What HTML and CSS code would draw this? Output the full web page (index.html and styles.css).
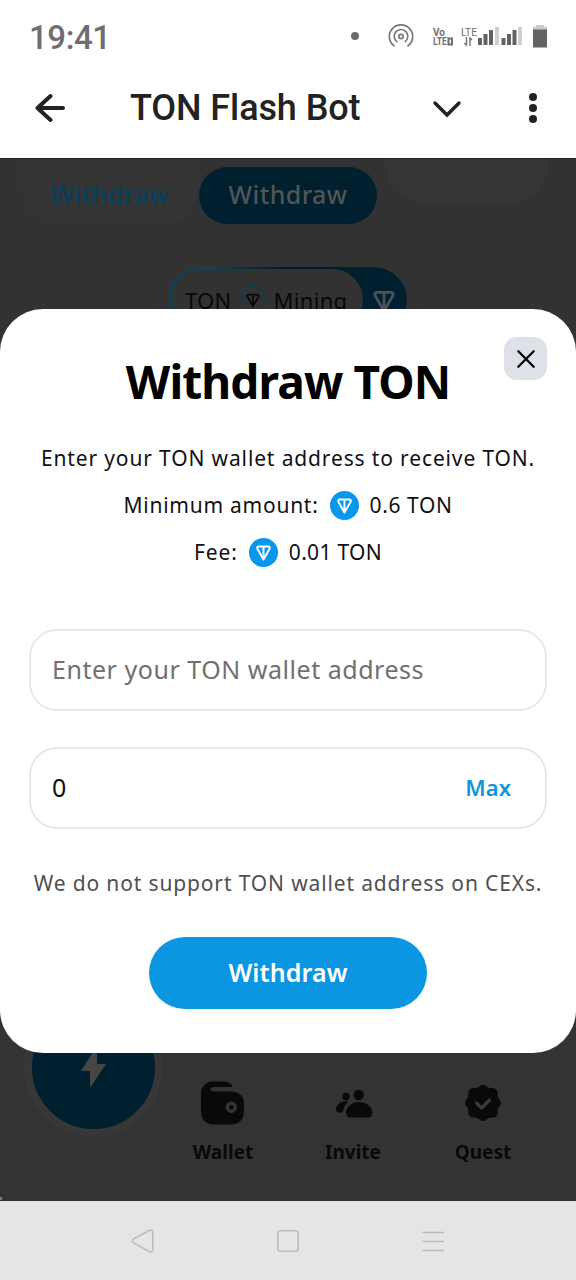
FILE: index.html
```
<!DOCTYPE html>
<html lang="en">
<head>
<meta charset="utf-8">
<title>TON Flash Bot</title>
<link rel="stylesheet" href="styles.css">
</head>
<body>
<svg class="defs" width="0" height="0" aria-hidden="true">
  <symbol id="ton" viewBox="0 0 28 28">
    <path d="M9.300 8.200h9.400q2 .2 1.100 2.400L14 20.800 8.200 10.600Q7.300 8.400 9.300 8.200ZM14 8.500v11.500" fill="none" stroke="currentColor" stroke-width="1.900" stroke-linejoin="round"/>
  </symbol>
</svg>
<div class="phone">
  <div class="status">
    <span class="clock">19:41</span>
    <svg class="status-icons" width="210" height="30" viewBox="0 0 210 30">
      <circle cx="15" cy="15" r="4" fill="#6b6b6b"/>
      <g fill="none" stroke="#777" stroke-width="1.700">
        <circle cx="61" cy="15.500" r="2.200"/>
        <path d="M57.300 21a6.800 6.800 0 1 1 7.400 0M54.600 25.300a11.700 11.700 0 1 1 12.800 0" />
      </g>
      <g font-family="Roboto, sans-serif" fill="#707070">
        <text x="93" y="15" font-size="10" font-weight="700" textLength="12" lengthAdjust="spacingAndGlyphs">Vo</text>
        <text x="93" y="24" font-size="10" font-weight="700" textLength="14" lengthAdjust="spacingAndGlyphs">LTE</text>
        <text x="121" y="15" font-size="10.500" textLength="16" lengthAdjust="spacingAndGlyphs">LTE</text>
      </g>
      <path d="M108.500 17.500h3.500v6h-3.500z" fill="none" stroke="#707070" stroke-width="2"/>
      <path d="M126.500 16v8l-2-2M130 25v-8l2 2" fill="none" stroke="#707070" stroke-width="1.400"/>
      <path d="M138 17h4v7h-4zM143.500 13h4v11h-4zM149 9h4v15h-4zM161.500 17h4v7h-4zM167 13h4v11h-4zM172.500 9h4v15h-4z" fill="#626262"/>
      <path d="M155 6h4v18h-4zM178 6h4v18h-4z" fill="#cfcfcf"/>
      <path d="M193 6h14v3h-14zM196 4h8v3h-8z" fill="#c9c9c9"/>
      <path d="M193 8.500h14v18h-14z" fill="#646464"/>
    </svg>
  </div>
  <header class="header">
    <svg class="back" width="30" height="30" viewBox="0 0 30 30"><path d="M28 15H3M15.500 3 2.500 15l13 12" fill="none" stroke="#222" stroke-width="4" stroke-linecap="round" stroke-linejoin="round"/></svg>
    <h1 class="app-title">TON Flash Bot</h1>
    <svg class="chevron" width="30" height="20" viewBox="0 0 30 20"><path d="M3 5l12 12L27 5" fill="none" stroke="#222" stroke-width="3.500" stroke-linecap="round"/></svg>
    <svg class="dots" width="10" height="32" viewBox="0 0 10 32" fill="#222"><circle cx="5" cy="5" r="4"/><circle cx="5" cy="16" r="4"/><circle cx="5" cy="27" r="4"/></svg>
  </header>

  <main class="app">
    <div class="actions">
      <span class="ghost-card">Withdraw</span>
      <span class="dim-button">Withdraw</span>
      <span class="blank-card"></span>
    </div>
    <div class="mining">
      <span class="mining-label">TON <svg class="mining-ring" width="28" height="28"><use href="#ton"/></svg> Mining</span>
      <svg class="mining-ton" width="42" height="42"><use href="#ton"/></svg>
    </div>
    <div class="tabbar">
      <div class="orb"><svg width="28" height="42" viewBox="0 0 28 42"><path d="M16 0 1 24h9v17l16-24h-9V0z" fill="#454545"/></svg></div>
      <div class="tab">
        <svg width="48" height="48" viewBox="0 0 48 48">
          <path d="M14 2.500h10c5 0 8.500 2 9.500 5.500H15c-5 0-5 4 0 4.500h18c8 1 12 5 12 12v8c0 8-5 13-13 13H15c-8 0-13-5-13-13v-18c0-7 5-12 12-12z" fill="#090909"/>
          <circle cx="32.300" cy="28.300" r="4" fill="#090909" stroke="#343434" stroke-width="3.500"/>
        </svg>
        <span>Wallet</span>
      </div>
      <div class="tab">
        <svg width="48" height="48" viewBox="0 0 48 48" fill="#090909">
          <circle cx="17" cy="17.500" r="3.700"/><circle cx="29.800" cy="16" r="5.200"/>
          <path d="M30 23c7 0 13.300 5 13.300 10.500 0 3-1.500 5-4.500 5H21.500c-3 0-4.500-2-4.500-5C17 28 23 23 30 23zM19.500 22.200c-3 2.500-4.500 5.300-5 8.800-1.500 4-8 3.500-7.500-1 .5-4.500 5.500-9 12.500-7.800z"/>
        </svg>
        <span>Invite</span>
      </div>
      <div class="tab">
        <svg width="48" height="48" viewBox="0 0 48 48">
          <path d="M24 6c3 0 3.500 2.300 6 2.800 3 .5 5.300-.3 7.300 1.700s1.200 4.300 1.700 7.300c.5 2.500 3 3.200 3 6.200s-2.500 3.500-3 6c-.5 3 .3 5.300-1.700 7.300s-4.300 1.200-7.300 1.700c-2.500.5-3 3-6 3s-3.500-2.500-6-3c-3-.5-5.300.3-7.300-1.700s-1.200-4.300-1.700-7.300c-.5-2.500-3-3-3-6s2.500-3.700 3-6.200c.5-3-.3-5.300 1.700-7.300s4.300-1.200 7.300-1.700c2.500-.5 3-2.800 6-2.800z" fill="#090909"/>
          <path d="m17.500 24 5 5 8-8" fill="none" stroke="#3a3a3a" stroke-width="3.200" stroke-linecap="round" stroke-linejoin="round"/>
        </svg>
        <span>Quest</span>
      </div>
    </div>

    <section class="modal" role="dialog">
      <button class="close" aria-label="Close"><svg width="20" height="20" viewBox="0 0 20 20"><path d="m2.300 2.300 15.400 15.400M17.700 2.300 2.300 17.700" stroke="#000" stroke-width="2.300" stroke-linecap="round"/></svg></button>
      <h2 class="modal-title">Withdraw TON</h2>
      <div class="info">
        <p class="lead">Enter your TON wallet address to receive TON.</p>
        <p class="row"><span class="min-label">Minimum amount:</span><svg class="coin" width="29" height="29"><use href="#ton"/></svg><span class="min-value">0.6 TON</span></p>
        <p class="row"><span class="fee-label">Fee:</span><svg class="coin" width="29" height="29"><use href="#ton"/></svg><span class="fee-value">0.01 TON</span></p>
      </div>
      <div class="field"><span class="placeholder">Enter your TON wallet address</span></div>
      <div class="field"><span class="amount">0</span><span class="max">Max</span></div>
      <p class="note">We do not support TON wallet address on CEXs.</p>
      <button class="submit">Withdraw</button>
    </section>
    <span class="corner-mark"></span>
  </main>

  <nav class="sysnav">
    <svg width="24" height="24" viewBox="0 0 24 24"><path d="M2.500 10 18.500 1.300q3-1 3.300 1.700v18q-.5 2.500-3.300 1.700L2.500 14q-2-2 0-4z"/></svg>
    <svg width="24" height="24" viewBox="0 0 24 24"><rect x="1.800" y="1.800" width="20.400" height="20.400" rx="3"/></svg>
    <svg width="24" height="24" viewBox="0 0 24 24"><path d="M1.500 3.500h21.500M1.500 12.500h21.500M1.500 21.500h21.500"/></svg>
  </nav>
</div>
</body>
</html>
```
FILE: styles.css
```
* { box-sizing: border-box; }
body { margin: 0; background: #fff; font-family: "Noto Sans", "Open Sans", sans-serif; color: #111; }
p, h1, h2 { margin: 0; }
button { border: 0; padding: 0; font-family: inherit; }
svg { display: block; flex: none; }
.defs { position: absolute; }
.phone { width: 576px; height: 1280px; display: flex; flex-direction: column; overflow: hidden; }

.status { height: 74px; padding: 1px 26px 0 29px; display: flex; align-items: center; justify-content: space-between; }
.clock { font: 500 33px/40px Roboto, sans-serif; color: #6e6e6e; letter-spacing: -.4px; padding-top: 1px; }
.status-icons { margin-top: -4px; }

.header { height: 84px; padding: 0 38px 17px 35px; display: flex; align-items: center; }
.app-title { margin-left: 65px; width: 302px; font: 500 36px/44px Roboto, sans-serif; letter-spacing: -.1px; color: #222; white-space: nowrap; }
.dots { margin-left: 66px; }

.app { position: relative; height: 1043px; background: #323232; display: flex; flex-direction: column; border-top: 1px solid #262626; }
.actions { display: flex; height: 66px; padding-left: 22px; }
.ghost-card, .dim-button { font-size: 25px; font-weight: 500; letter-spacing: .4px; display: flex; justify-content: center; align-items: center; }
.ghost-card { width: 176px; height: 66px; padding-top: 4px; border-radius: 0 0 34px 34px; background: #343434; color: #06405c; }
.dim-button { width: 178px; height: 57px; margin: 8px 0 0 1px; padding-bottom: 3px; border-radius: 29px; background: #001f2f; color: #4f5658; }
.blank-card { width: 164px; height: 44px; margin-left: 7px; border-radius: 0 0 40px 40px; background: #353535; }
.mining { width: 238px; height: 66px; margin: 42px 0 0 169px; border-radius: 33px; background: #002c42; display: flex; padding: 2px; background: linear-gradient(90deg, #064462 0 20%, #001f2f 45%); }
.mining-label { width: 192px; height: 62px; padding-left: 14px; border-radius: 31px; background: #323232; color: #080808; display: flex; align-items: center; gap: 7px; font-size: 22px; letter-spacing: .3px; }
.mining-ring { border: 1.500px solid #064462; border-radius: 50%; }
.mining-ton { margin: 11px 0 0 0; color: #4b5257; }

.tabbar { margin-top: auto; height: 200px; display: flex; padding-left: 24px; background: #333; }
.orb { width: 139px; height: 139px; margin: -3px 0 0; border: 8px solid #373737; border-radius: 50%; background: #001f2f; display: flex; align-items: center; justify-content: center; }
.orb svg { margin-top: 1px; }
.tab { width: 130px; padding-top: 78px; display: flex; flex-direction: column; align-items: center; color: #090909; font-size: 19px; font-weight: 700; line-height: 28px; gap: 11px; }
.orb + .tab { margin-left: -5px; }

.modal { position: absolute; left: 0; top: 150px; width: 576px; height: 744px; padding: 40px 29px 0; border-radius: 43px; background: #fff; display: flex; flex-direction: column; align-items: center; white-space: nowrap; }
.close { position: absolute; right: 29px; top: 28px; width: 43px; height: 43px; border-radius: 13px; background: #dfe1e9; display: flex; align-items: center; justify-content: center; }
.modal-title { font-size: 46px; line-height: 64px; font-weight: 700; letter-spacing: -.9px; color: #000; }
.info { margin-top: 22px; display: flex; flex-direction: column; align-items: center; font-size: 21px; line-height: 47px; }
.lead { letter-spacing: .86px; }
.row { display: flex; align-items: center; gap: 11px; height: 47px; }
.min-label { letter-spacing: .75px; }
.min-value { letter-spacing: .6px; }
.fee-label { letter-spacing: .9px; }
.fee-value { letter-spacing: .3px; }
.coin { color: #fff; background: #0798ec; border-radius: 50%; }
.field { width: 518px; height: 82px; margin-top: 36px; padding: 0 34px 2px 21px; border: 2px solid #e8e8e8; border-radius: 28px; display: flex; align-items: center; justify-content: space-between; font-size: 25px; }
.info + .field { margin-top: 53px; }
.placeholder { color: #707070; letter-spacing: .53px; }
.max { color: #1295d8; font-size: 22px; font-weight: 600; }
.note { margin-top: 35px; font-size: 21px; line-height: 38px; letter-spacing: .86px; color: #505050; }
.submit { width: 278px; height: 72px; margin-top: 35px; padding-bottom: 2px; border-radius: 36px; background: #0a96e0; color: #fff; font-size: 25px; font-weight: 600; letter-spacing: .1px; }
.corner-mark { position: absolute; left: 0; bottom: 1px; width: 2px; height: 3px; background: #3f8fc4; }

.sysnav { height: 79px; background: #e5e5e5; display: flex; justify-content: center; align-items: center; gap: 121px; }
.sysnav svg { fill: none; stroke: #bbb; stroke-width: 1.500; }
```
